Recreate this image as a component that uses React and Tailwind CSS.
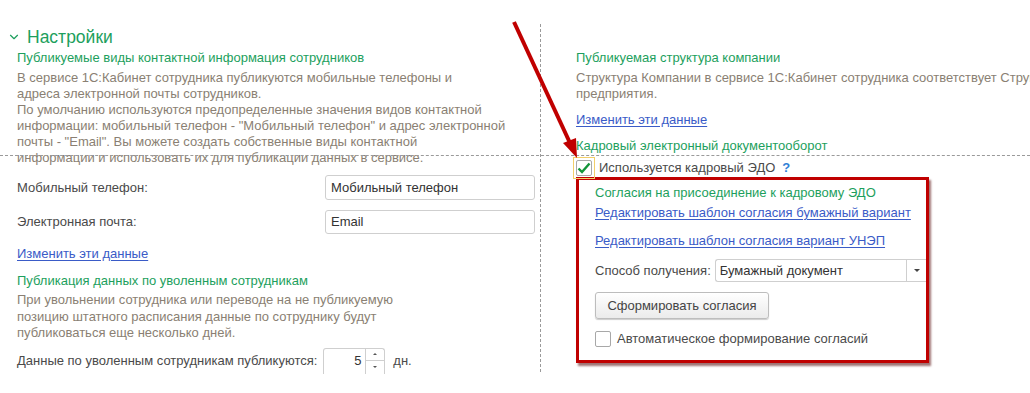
import React from 'react';
import { ChevronDown } from 'lucide-react';

const green = 'text-[#1d9f5d]';

const Heading = ({ children, className = '' }) => (
  <div className={`${green} text-[13px] leading-4 ${className}`}>{children}</div>
);

const Link = ({ children, className = '' }) => (
  <div className={`text-[#3a5bc7] underline underline-offset-2 text-[13px] leading-4 ${className}`}>{children}</div>
);

const TextInput = ({ value, className = '' }) => (
  <div className={`border border-[#cfcfcf] rounded-[3px] bg-white px-[5px] flex items-center text-[13px] text-[#333] ${className}`}>
    {value}
  </div>
);

const Checkbox = ({ checked }) => (
  <div className="w-4 h-4 border border-[#a8a8a8] rounded-[2px] bg-white flex items-center justify-center">
    {checked && (
      <svg width="14" height="12" viewBox="0 0 14 12">
        <path d="M1.5 6.5 L5 10 L12.5 1.5" fill="none" stroke="#14953a" strokeWidth="2.4" />
      </svg>
    )}
  </div>
);

export default function App() {
  return (
    <div
      className="relative w-[1030px] h-[393px] overflow-hidden bg-white whitespace-nowrap"
      style={{ fontFamily: '"Liberation Sans", Arial, sans-serif' }}
    >
      <div className="flex">
        {/* Left column */}
        <div className="w-[540px] shrink-0 pt-[27px]">
          <div className={`flex items-center gap-[6px] pl-[7px] ${green}`}>
            <ChevronDown className="w-[14px] h-[14px]" strokeWidth={2} />
            <span className="text-[17.5px] leading-5">Настройки</span>
          </div>
          <div className="pl-[17px]">
            <Heading className="mt-[3px]">Публикуемые виды контактной информация сотрудников</Heading>
            <div className="mt-1 text-[13px] leading-4 text-[#8a7f73]">
              <div>В сервисе 1С:Кабинет сотрудника публикуются мобильные телефоны и</div>
              <div>адреса электронной почты сотрудников.</div>
              <div>По умолчанию используются предопределенные значения видов контактной</div>
              <div>информации: мобильный телефон - "Мобильный телефон" и адрес электронной</div>
              <div>почты - "Email". Вы можете создать собственные виды контактной</div>
              <div>информации и использовать их для публикации данных в сервисе.</div>
            </div>
            <div className="mt-[9px] flex items-center pr-[5px]">
              <span className="w-[308px] text-[13px] text-[#4a4a4a]">Мобильный телефон:</span>
              <TextInput value="Мобильный телефон" className="flex-1 h-[25px]" />
            </div>
            <div className="mt-[10px] flex items-center pr-[5px]">
              <span className="w-[308px] text-[13px] text-[#4a4a4a]">Электронная почта:</span>
              <TextInput value="Email" className="flex-1 h-[24px]" />
            </div>
            <Link className="mt-[12px]">Изменить эти данные</Link>
            <Heading className="mt-[11px]">Публикация данных по уволенным сотрудникам</Heading>
            <div className="mt-[3px] text-[13px] leading-[16.5px] text-[#8a7f73]">
              <div>При увольнении сотрудника или переводе на не публикуемую</div>
              <div>позицию штатного расписания данные по сотруднику будут</div>
              <div>публиковаться еще несколько дней.</div>
            </div>
            <div className="mt-[6px] flex items-center">
              <span className="text-[13px] text-[#4a4a4a]">Данные по уволенным сотрудникам публикуются:</span>
              <div className="ml-[6px] w-[62px] h-[26px] border border-[#cfcfcf] border-b-0 rounded-t-[3px] flex">
                <div className="flex-1 flex items-center justify-end pr-[4px] text-[13px] text-[#333]">5</div>
                <div className="w-[19px] border-l border-[#cfcfcf] flex flex-col">
                  <div className="h-[12px] border-b border-[#cfcfcf] flex items-center justify-center">
                    <div className="w-0 h-0 border-l-[2px] border-r-[2px] border-b-[2px] border-l-transparent border-r-transparent border-b-[#555]" />
                  </div>
                  <div className="flex-1 flex items-center justify-center">
                    <div className="w-0 h-0 border-l-[2px] border-r-[2px] border-t-[2px] border-l-transparent border-r-transparent border-t-[#555]" />
                  </div>
                </div>
              </div>
              <span className="ml-[8px] text-[13px] text-[#4a4a4a]">дн.</span>
            </div>
          </div>
        </div>

        {/* Right column */}
        <div className="flex-1 pl-[36px] pt-[50px]">
          <Heading>Публикуемая структура компании</Heading>
          <div className="mt-1 text-[13px] leading-4 text-[#8a7f73]">
            <div>Структура Компании в сервисе 1С:Кабинет сотрудника соответствует Структуре</div>
            <div>предприятия.</div>
          </div>
          <Link className="mt-[10px]">Изменить эти данные</Link>
          <Heading className="mt-[10px]">Кадровый электронный документооборот</Heading>
          <div className="mt-[3px] flex items-center">
            <div className="p-[2px] border border-[#f3cf6a] -ml-[3px]">
              <Checkbox checked />
            </div>
            <span className="ml-[4px] text-[13px] text-[#4a4a4a]">Используется кадровый ЭДО</span>
            <span className="ml-[7px] text-[13px] text-[#2f7fd6] font-bold">?</span>
          </div>

          <div className="-mt-[2px] w-[353px] border-[3px] border-[#c00000] shadow-[2px_3px_2px_rgba(80,0,0,0.55)] pl-[16px] pt-[5px] pb-[11px]">
            <Heading>Согласия на присоединение к кадровому ЭДО</Heading>
            <Link className="mt-[4px]">Редактировать шаблон согласия бумажный вариант</Link>
            <Link className="mt-[12px]">Редактировать шаблон согласия вариант УНЭП</Link>
            <div className="mt-[10px] flex items-center">
              <span className="text-[13px] text-[#4a4a4a]">Способ получения:</span>
              <div className="ml-[4px] flex-1 h-[23px] border border-[#cfcfcf] border-r-0 rounded-l-[3px] flex">
                <div className="flex-1 flex items-center px-[4px] text-[13px] text-[#333]">Бумажный документ</div>
                <div className="w-[20px] border-l border-[#cfcfcf] flex items-center justify-center">
                  <div className="w-0 h-0 border-l-[3px] border-r-[3px] border-t-[3px] border-l-transparent border-r-transparent border-t-[#444]" />
                </div>
              </div>
            </div>
            <div className="mt-[10px] w-[174px] h-[27px] border border-[#bdbdbd] rounded-[3px] bg-gradient-to-b from-white to-[#ebebeb] shadow-[0_1px_1px_rgba(0,0,0,0.2)] flex items-center justify-center text-[13px] text-[#444]">
              Сформировать согласия
            </div>
            <div className="mt-[10px] flex items-center">
              <Checkbox />
              <span className="ml-[6px] text-[13px] text-[#4a4a4a]">Автоматическое формирование согласий</span>
            </div>
          </div>
        </div>
      </div>

      {/* guide lines over the page */}
      <div className="absolute left-0 right-0 top-[155px] border-t border-dashed border-[#9a9a9a]" />
      <div className="absolute left-[540px] top-[24px] h-[348px] border-l border-dashed border-[#9a9a9a]" />

      {/* red arrow */}
      <svg className="absolute left-0 top-0" width="1030" height="393">
        <line x1="514" y1="22" x2="570" y2="143" stroke="#c00000" strokeWidth="4" />
        <polygon points="577,158 563,143 576,138" fill="#c00000" />
      </svg>
    </div>
  );
}
